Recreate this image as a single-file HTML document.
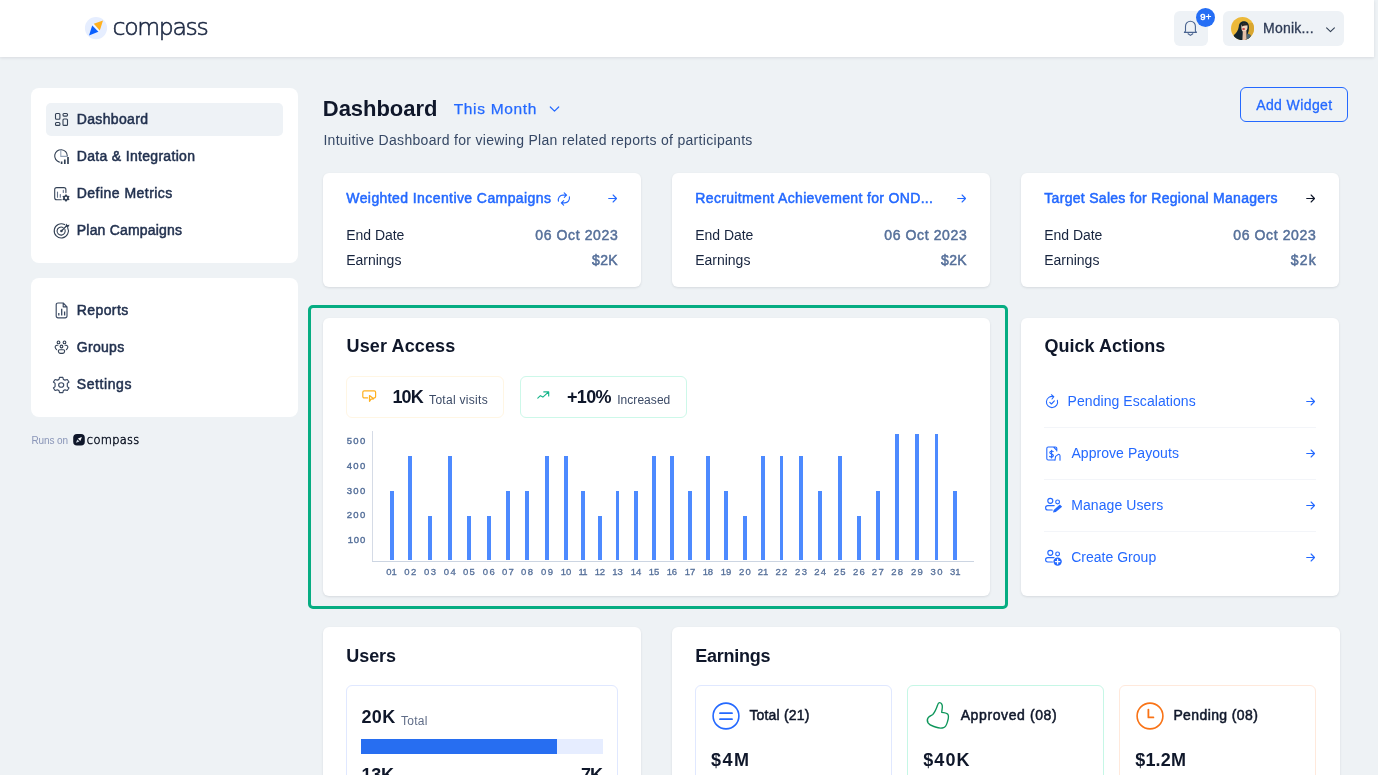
<!DOCTYPE html>
<html lang="en"><head><meta charset="utf-8"><title>Compass Dashboard</title>
<style>
*{box-sizing:border-box;margin:0;padding:0}
html,body{width:1378px;height:775px;overflow:hidden}
body{background:#eef2f5;font-family:"Liberation Sans",sans-serif;position:relative;color:#0f172a}
.a{position:absolute}
.t{position:absolute;white-space:nowrap;line-height:1}
.card{position:absolute;background:#fff;border-radius:6px;box-shadow:0 1px 3px rgba(16,24,40,.07),0 1px 2px rgba(16,24,40,.04)}
.box{position:absolute;background:#fff;border-radius:6px;border:1px solid #e0e8ff}
svg{position:absolute;overflow:visible}
.s{fill:none;stroke:#3b4a63;stroke-width:1.15;stroke-linecap:round;stroke-linejoin:round}
.sb{fill:none;stroke:#2469ff;stroke-width:1.1;stroke-linecap:round;stroke-linejoin:round}
.hr{position:absolute;height:1px;background:#f3f5f9;left:1044px;width:272px}
.bar{position:absolute;width:3.8px;background:#4d8aff}
</style></head>
<body>

<!-- header -->
<div class="a" style="left:0;top:0;width:1374px;height:57px;background:#fff;box-shadow:0 1px 3px rgba(16,24,40,.10)"></div>
<!-- logo -->
<svg style="left:85px;top:17.1px" width="22" height="22.4" viewBox="0 0 22 22.4">
 <circle cx="11" cy="11.1" r="11.1" fill="#e6eeff"/>
 <path d="M18 3.5 L8.8 6.7 L14.8 13.5 Z" fill="#ffb11f"/>
 <path d="M4 18.4 L7.2 8.5 L13.4 14.7 Z" fill="#0a60ff"/>
 <path d="M7.7 7.2 L14.4 14.4" stroke="#fff" stroke-width="1" fill="none"/>
</svg>
<!-- bell -->
<div class="a" style="left:1173.6px;top:11.1px;width:34.4px;height:34.7px;border-radius:6px;background:#eef2f6"></div>
<svg style="left:0;top:0" width="1378" height="57" viewBox="0 0 1378 57">
 <path d="M1185.5 31 V26.2 A4.95 4.95 0 0 1 1195.4 26.2 V31 L1196.5 32.4 H1184.4 Z M1188.1 33.7 L1190.45 35.4 L1192.8 33.7" fill="none" stroke="#4a6490" stroke-width="1.1" stroke-linejoin="round" stroke-linecap="round"/>
</svg>
<div class="a" style="left:1196.15px;top:7.7px;width:19.2px;height:19.2px;border-radius:50%;background:#256ef5"></div>
<!-- user -->
<div class="a" style="left:1223.1px;top:11.1px;width:120.5px;height:34.7px;border-radius:6px;background:#eef2f6"></div>
<svg style="left:1230.7px;top:16.9px" width="23" height="23" viewBox="0 0 23 23">
 <defs><clipPath id="av"><circle cx="11.5" cy="11.5" r="11.5"/></clipPath></defs>
 <g clip-path="url(#av)">
  <rect width="23" height="23" fill="#ecb93a"/>
  <rect x="17.2" y="6" width="6" height="14" fill="#d9a730"/>
  <path d="M7.8 9.5 C8 5.5 11 3.8 13.6 4.2 C16.8 4.6 18.2 7.4 18 10.5 C17.9 13 17.6 15 16.8 16.6 L19.6 18.4 L19 23 H4 L2.6 18.2 C5 16.6 7.4 13.6 7.8 9.5 Z" fill="#14252e"/>
  <path d="M16.2 16.4 L19.8 18 L18 22.4 L15.4 22.8 Z" fill="#4d6672"/>
  <path d="M10.6 8 C11.4 5.8 15.6 5.8 16.4 8.6 C16.9 10.6 16.4 13.4 14.6 14.6 C13.4 15.2 11.8 14.8 11 13.4 C10.2 12 10.2 9.6 10.6 8 Z" fill="#f0d3bd"/>
  <path d="M11.8 14 H15.4 L15.6 23 H11.4 Z" fill="#e2bfa6"/>
  <path d="M10.9 6.6 C12.6 5.6 14.8 5.8 16.2 7 L15.8 8.6 C14.4 8.2 12.6 8.4 11 9.4 Z" fill="#2a2622"/>
  <ellipse cx="12.6" cy="12" rx="1.5" ry="0.75" fill="#c3161f"/>
 </g>
</svg>
<svg style="left:1326px;top:26.5px" width="9" height="6" viewBox="0 0 9 6"><path class="s" style="stroke:#334155;stroke-width:1.1" d="M0.6 0.8 L4.5 4.7 L8.4 0.8"/></svg>

<!-- sidebar -->
<div class="a" style="left:31px;top:87.7px;width:267px;height:175.2px;background:#fff;border-radius:8px"></div>
<div class="a" style="left:46px;top:103px;width:237px;height:33px;background:#eef2f6;border-radius:5px"></div>
<div class="a" style="left:31px;top:278px;width:267px;height:138.5px;background:#fff;border-radius:8px"></div>

<!-- sidebar icons -->
<svg style="left:0;top:0" width="400" height="300" viewBox="0 0 400 300">
 <g class="s" style="stroke:#334155;stroke-width:1.1">
  <rect x="55.5" y="113.5" width="4.4" height="5.7" rx="1"/>
  <rect x="63" y="113.5" width="4.5" height="2.6" rx="1"/>
  <rect x="55.5" y="122.5" width="4.4" height="2.9" rx="1"/>
  <rect x="63" y="119" width="4.5" height="6.4" rx="1"/>
  <path d="M67.3 156 A6.3 6.3 0 1 0 59.4 162.1"/>
  <path style="stroke:#94a3b8" d="M60.8 150 V156.4 H67"/>
  <path d="M61.3 199.7 H56.7 A2 2 0 0 1 54.7 197.7 V189.6 A2 2 0 0 1 56.7 187.6 H63.9 A2 2 0 0 1 65.9 189.6 V192.6"/>
  <path style="stroke:#64748b" d="M57.5 192 V197.2 M60.3 194.6 V197.2 M63.3 190.4 V192.4"/>
  <path d="M67.6 227.6 A7.1 7.1 0 1 1 64.6 224.6"/>
  <path d="M64.9 229.4 A4.1 4.1 0 1 1 63 227.4"/>
  <path d="M61.4 231 L66.4 226"/>
 </g>
 <path d="M61.6 163.9 V161.5 M64.8 163.9 V159.5 M68 163.9 V157.1" stroke="#334155" stroke-width="1.7" fill="none"/>
 <path d="M66.00 193.90 L67.35 195.66 L69.55 195.95 L68.70 198.00 L69.55 200.05 L67.35 200.34 L66.00 202.10 L64.65 200.34 L62.45 200.05 L63.30 198.00 L62.45 195.95 L64.65 195.66 Z" fill="#334155"/>
 <circle cx="66" cy="198" r="1.15" fill="#fff"/>
 <circle cx="61.4" cy="231" r="1.3" fill="#334155"/>
 <path d="M65.6 226.8 L66 223.4 L67.4 225 L69.6 224.8 L68.2 227.2 Z" fill="#334155"/>
</svg>
<svg style="left:55px;top:302px" width="14" height="17" viewBox="0 0 14 17">
 <path class="s" d="M8.2 1 H3 A1.8 1.8 0 0 0 1.2 2.8 V14 A1.8 1.8 0 0 0 3 15.8 H10.2 A1.8 1.8 0 0 0 12 14 V4.8 Z M8.2 1 V4.8 H12"/>
 <path class="s" style="stroke-linecap:butt;stroke-width:1.3" d="M3.8 13.4 V11 M6.7 13.4 V6.8 M9.6 13.4 V9.4"/>
</svg>
<svg style="left:0;top:0" width="100" height="400" viewBox="0 0 100 400">
 <g class="s" style="stroke:#334155;stroke-width:1.1">
  <circle cx="58.5" cy="342.4" r="1.35"/><circle cx="64.5" cy="342.4" r="1.35"/><circle cx="61.5" cy="346.5" r="1.35"/>
  <path d="M57.9 345.3 H57 C55.6 345.3 55 346.4 55.2 347.4 C55.4 348.4 55.9 349 56.6 349.6 M65.1 345.3 H66 C67.4 345.3 68 346.4 67.8 347.4 C67.6 348.4 67.1 349 66.4 349.6"/>
  <path d="M59.7 349.7 H63.3 C64.2 349.7 64.8 350.3 64.7 351 C64.5 352.4 63.6 353.4 62.4 353.4 H60.6 C59.4 353.4 58.5 352.4 58.3 351 C58.2 350.3 58.8 349.7 59.7 349.7 Z"/>
 </g>
</svg>
<svg style="left:51.3px;top:375.7px" width="20.4" height="18" viewBox="0 0 16 16" preserveAspectRatio="none">
 <circle class="s" cx="8" cy="8" r="2" vector-effect="non-scaling-stroke"/>
 <path class="s" vector-effect="non-scaling-stroke" d="M6.7 1.2 H9.3 L9.7 3 L11 3.7 L12.8 3.1 L14.1 5.3 L12.8 6.6 V8 L12.8 9.4 L14.1 10.7 L12.8 12.9 L11 12.3 L9.7 13 L9.3 14.8 H6.7 L6.3 13 L5 12.3 L3.2 12.9 L1.9 10.7 L3.2 9.4 V6.6 L1.9 5.3 L3.2 3.1 L5 3.7 L6.3 3 Z"/>
</svg>
<!-- runs on logo -->
<svg style="left:72.7px;top:434.4px" width="12" height="12" viewBox="0 0 12 12">
 <rect x="0.2" y="0" width="11.6" height="11.6" rx="3.8" fill="#0f172a"/>
 <path d="M8.9 2.9 L4.9 4.5 L7.3 6.9 Z" fill="#fff"/><path d="M3 8.8 L4.3 5.4 L6.4 7.5 Z" fill="#cbd5e1"/>
</svg>

<!-- Add widget -->
<div class="a" style="left:1240px;top:87.3px;width:108px;height:34.6px;border:1px solid #2469ff;border-radius:6px"></div>
<svg style="left:549px;top:105.5px" width="11" height="7" viewBox="0 0 11 7"><path class="sb" style="stroke-width:1.2" d="M1.3 1 L5.5 5.2 L9.7 1"/></svg>

<!-- top cards -->
<div class="card" style="left:323px;top:173px;width:318px;height:113.5px"></div>
<div class="card" style="left:672px;top:173px;width:318px;height:113.5px"></div>
<div class="card" style="left:1021px;top:173px;width:318px;height:113.5px"></div>
<svg style="left:0;top:0" width="700" height="300" viewBox="0 0 700 300">
 <path class="sb" style="stroke-width:1.15" d="M558.4 201.2 C557.7 197.6 560 195.1 563 195.1 H566.4 M564.2 192.9 L566.6 195.1 L564.3 197.4 M569.4 196.8 C570 200.4 567.8 202.9 564.7 202.9 H561.4 M563.7 200.6 L561.3 202.9 L563.6 205.2"/>
</svg>
<svg style="left:608px;top:194.1px" width="10" height="9" viewBox="0 0 10 9"><path class="sb" d="M0.7 4.5 H8.4 M5.1 1 L8.5 4.5 L5.1 8"/></svg>
<svg style="left:957px;top:194.1px" width="10" height="9" viewBox="0 0 10 9"><path class="sb" d="M0.7 4.5 H8.4 M5.1 1 L8.5 4.5 L5.1 8"/></svg>
<svg style="left:1306px;top:194.1px" width="10" height="9" viewBox="0 0 10 9"><path class="sb" style="stroke:#0f172a" d="M0.7 4.5 H8.4 M5.1 1 L8.5 4.5 L5.1 8"/></svg>

<!-- highlight -->
<div class="a" style="left:308px;top:305px;width:700px;height:304px;border:3px solid #06ad82;border-radius:5px"></div>
<div class="card" style="left:323px;top:317.8px;width:667.2px;height:278px"></div>
<div class="box" style="left:346px;top:375.5px;width:158px;height:42px;border-color:#fff6e4"></div>
<div class="box" style="left:520px;top:375.5px;width:166.5px;height:42px;border-color:#cdf8e9"></div>
<svg style="left:362px;top:389.5px" width="15" height="12" viewBox="0 0 15 12">
 <path class="s" style="stroke:#ffb01f;stroke-width:1.2" d="M5.6 7.9 H2.2 A1.4 1.4 0 0 1 0.8 6.5 V2.2 A1.4 1.4 0 0 1 2.2 0.8 H12.2 A1.4 1.4 0 0 1 13.6 2.2 V6.5 A1.4 1.4 0 0 1 12.2 7.9 H12 M7.5 5.5 L11.6 8.8 L9 9.1 L7.5 11.3 Z"/>
</svg>
<svg style="left:536.5px;top:390.5px" width="13" height="9" viewBox="0 0 13 9">
 <path class="s" style="stroke:#16b58a" d="M0.8 7.1 L3.4 4.7 L5.9 6.1 L11.6 0.9 M6.8 0.9 H11.7 V5"/>
</svg>
<!-- chart axes -->
<div class="a" style="left:372px;top:431px;width:1px;height:130.5px;background:#d5dbe6"></div>
<div class="a" style="left:372px;top:560.8px;width:602px;height:1.2px;background:#ccd5e2"></div>
<div class="bar" style="left:389.9px;top:491px;height:69px"></div>
<div class="bar" style="left:408.4px;top:456px;height:104px"></div>
<div class="bar" style="left:428.1px;top:516px;height:44px"></div>
<div class="bar" style="left:447.9px;top:456px;height:104px"></div>
<div class="bar" style="left:467.0px;top:516px;height:44px"></div>
<div class="bar" style="left:486.9px;top:516px;height:44px"></div>
<div class="bar" style="left:506.0px;top:491px;height:69px"></div>
<div class="bar" style="left:525.1px;top:491px;height:69px"></div>
<div class="bar" style="left:545.1px;top:456px;height:104px"></div>
<div class="bar" style="left:564.1px;top:456px;height:104px"></div>
<div class="bar" style="left:581.1px;top:491px;height:69px"></div>
<div class="bar" style="left:598.0px;top:516px;height:44px"></div>
<div class="bar" style="left:615.7px;top:491px;height:69px"></div>
<div class="bar" style="left:634.2px;top:491px;height:69px"></div>
<div class="bar" style="left:652.1px;top:456px;height:104px"></div>
<div class="bar" style="left:670.0px;top:456px;height:104px"></div>
<div class="bar" style="left:688.1px;top:491px;height:69px"></div>
<div class="bar" style="left:706.0px;top:456px;height:104px"></div>
<div class="bar" style="left:724.1px;top:491px;height:69px"></div>
<div class="bar" style="left:743.0px;top:516px;height:44px"></div>
<div class="bar" style="left:761.1px;top:456px;height:104px"></div>
<div class="bar" style="left:779.5px;top:456px;height:104px"></div>
<div class="bar" style="left:799.1px;top:456px;height:104px"></div>
<div class="bar" style="left:818.2px;top:491px;height:69px"></div>
<div class="bar" style="left:837.8px;top:456px;height:104px"></div>
<div class="bar" style="left:857.0px;top:516px;height:44px"></div>
<div class="bar" style="left:875.9px;top:491px;height:69px"></div>
<div class="bar" style="left:895.2px;top:434px;height:126px"></div>
<div class="bar" style="left:915.0px;top:434px;height:126px"></div>
<div class="bar" style="left:934.6px;top:434px;height:126px"></div>
<div class="bar" style="left:953.4px;top:491px;height:69px"></div>


<!-- quick actions -->
<div class="card" style="left:1021px;top:317.8px;width:318px;height:278px"></div>
<div class="hr" style="top:427px"></div>
<div class="hr" style="top:479px"></div>
<div class="hr" style="top:531px"></div>
<svg style="left:1306px;top:396.8px" width="10" height="9" viewBox="0 0 10 9"><path class="sb" d="M0.7 4.5 H8.4 M5.1 1 L8.5 4.5 L5.1 8"/></svg>
<svg style="left:1306px;top:448.8px" width="10" height="9" viewBox="0 0 10 9"><path class="sb" d="M0.7 4.5 H8.4 M5.1 1 L8.5 4.5 L5.1 8"/></svg>
<svg style="left:1306px;top:500.8px" width="10" height="9" viewBox="0 0 10 9"><path class="sb" d="M0.7 4.5 H8.4 M5.1 1 L8.5 4.5 L5.1 8"/></svg>
<svg style="left:1306px;top:552.8px" width="10" height="9" viewBox="0 0 10 9"><path class="sb" d="M0.7 4.5 H8.4 M5.1 1 L8.5 4.5 L5.1 8"/></svg>

<svg style="left:1045.3px;top:393.8px" width="14" height="15" viewBox="0 0 14 15">
 <path class="sb" d="M8.6 2.6 A5.6 5.6 0 1 0 12.4 6.4 M6.4 0.8 L8.8 2.6 L7 5"/>
 <path class="sb" d="M4.8 8.4 L6.4 10 L9.4 6.8"/>
</svg>
<svg style="left:1046px;top:446px" width="15" height="15" viewBox="0 0 15 15">
 <path class="sb" d="M10.8 5 V2.4 A1.4 1.4 0 0 0 9.4 1 H2.2 A1.4 1.4 0 0 0 0.8 2.4 V12.6 A1.4 1.4 0 0 0 2.2 14 H9 M7.6 1 L10.8 4.4"/>
 <path class="sb" d="M7.2 5.4 C5.6 4.6 3.8 5.2 3.8 6.6 C3.8 8.6 7.4 7.6 7.4 9.6 C7.4 11 5.4 11.4 3.6 10.4 M5.6 4.2 V12"/>
 <path class="sb" d="M9 14 L9.6 10.4 L12 8.6 C13.2 8 14 8.8 14 10 V14.2"/>
</svg>
<svg style="left:0;top:0" width="1378" height="600" viewBox="0 0 1378 600">
 <g class="sb" style="stroke-width:1.15">
  <circle cx="1050.3" cy="500.8" r="2.5"/>
  <circle cx="1057.6" cy="501.9" r="1.9"/>
  <path d="M1054.2 505.6 H1047.8 A2.2 2.2 0 0 0 1047.8 510 H1052.2"/>
  <circle cx="1050.3" cy="552.8" r="2.5"/>
  <circle cx="1057.6" cy="553.9" r="1.9"/>
  <path d="M1054 557.6 H1047.8 A2.2 2.2 0 0 0 1047.8 562 H1052.4"/>
 </g>
 <path d="M1053 512.6 L1053.7 510 L1059.9 504.5 L1062.1 506.8 L1055.8 512.1 Z" fill="#2469ff"/>
 <circle cx="1057.6" cy="561.6" r="4.2" fill="#2469ff"/>
 <path d="M1057.6 559.4 V563.8 M1055.4 561.6 H1059.8" stroke="#fff" stroke-width="1.3" stroke-linecap="round"/>
</svg>

<!-- users -->
<div class="card" style="left:323px;top:626.8px;width:318px;height:200px"></div>
<div class="box" style="left:346px;top:685px;width:272px;height:140px"></div>
<div class="a" style="left:361px;top:739px;width:242px;height:15px;background:#e6edff"></div>
<div class="a" style="left:361px;top:739px;width:196px;height:15px;background:#276ef1"></div>

<!-- earnings -->
<div class="card" style="left:672px;top:626.8px;width:667.8px;height:200px"></div>
<div class="box" style="left:695px;top:685px;width:196.5px;height:140px"></div>
<div class="box" style="left:907px;top:685px;width:196.5px;height:140px;border-color:#c6f7e6"></div>
<div class="box" style="left:1119px;top:685px;width:197px;height:140px;border-color:#ffe9dc"></div>
<svg style="left:711.5px;top:701.5px" width="28" height="28" viewBox="0 0 28 28">
 <circle cx="14" cy="14" r="12.9" fill="none" stroke="#2469ff" stroke-width="1.6"/>
 <path d="M8 11.2 H20 M8 17.2 H20" stroke="#2469ff" stroke-width="1.8" stroke-linecap="round"/>
</svg>
<svg style="left:0;top:0" width="1378" height="775" viewBox="0 0 1378 775">
 <path d="M939.5 702.6 C941.5 702.6 942.6 705 942.3 707.5 L941.7 712.4 C944 712.6 946.5 713 947.6 714 C949 715.4 948.6 718 947.6 721.2 C946.8 724 946.4 726.6 943.6 727.6 C941 728.6 938 728 935.4 727 C932.6 726 929.6 725.4 928.2 723.2 C927 721.2 927.2 719 928.2 717.6 C929.6 716 931.4 715.6 932.8 714.4 C935 712.2 936.4 708.6 937.6 705 C938 703.6 938.6 702.6 939.5 702.6 Z" fill="none" stroke="#0d965a" stroke-width="1.35" stroke-linejoin="round"/>
</svg>
<svg style="left:1136px;top:701.5px" width="28" height="28" viewBox="0 0 28 28">
 <circle cx="14" cy="14" r="12.9" fill="none" stroke="#f97316" stroke-width="1.6"/>
 <path d="M12.4 7.6 V15.4 H17.4" fill="none" stroke="#f97316" stroke-width="1.8" stroke-linecap="round" stroke-linejoin="round"/>
</svg>

<!-- text -->
<div class="a" style="left:0;top:0;width:1378px;height:775px;will-change:transform">
<div class="t" style="left:112.60px;top:16.00px;font-size:23.6px;font-weight:200;letter-spacing:-1.370px;color:#1e2a44;font-family:'DejaVu Sans',sans-serif;-webkit-text-stroke:0.6px #1e2a44;">compass</div>
<div class="t" style="left:1200.20px;top:12.00px;font-size:9.5px;letter-spacing:0.156px;color:#fff;-webkit-text-stroke:0.45px #fff;">9+</div>
<div class="t" style="left:1263.00px;top:21.00px;font-size:14px;letter-spacing:0.226px;color:#2d3a55;-webkit-text-stroke:0.3px #2d3a55;">Monik...</div>
<div class="t" style="left:76.80px;top:112.00px;font-size:14px;letter-spacing:0.338px;color:#22314f;-webkit-text-stroke:0.5px #22314f;">Dashboard</div>
<div class="t" style="left:76.80px;top:149.00px;font-size:14px;letter-spacing:0.314px;color:#22314f;-webkit-text-stroke:0.5px #22314f;">Data &amp; Integration</div>
<div class="t" style="left:76.80px;top:186.00px;font-size:14px;letter-spacing:0.464px;color:#22314f;-webkit-text-stroke:0.5px #22314f;">Define Metrics</div>
<div class="t" style="left:76.80px;top:223.00px;font-size:14px;letter-spacing:0.197px;color:#22314f;-webkit-text-stroke:0.5px #22314f;">Plan Campaigns</div>
<div class="t" style="left:76.80px;top:303.00px;font-size:14px;letter-spacing:0.395px;color:#22314f;-webkit-text-stroke:0.5px #22314f;">Reports</div>
<div class="t" style="left:76.80px;top:340.00px;font-size:14px;letter-spacing:0.296px;color:#22314f;-webkit-text-stroke:0.5px #22314f;">Groups</div>
<div class="t" style="left:76.80px;top:377.00px;font-size:14px;letter-spacing:0.587px;color:#22314f;-webkit-text-stroke:0.5px #22314f;">Settings</div>
<div class="t" style="left:31.40px;top:436.00px;font-size:10px;letter-spacing:-0.092px;color:#8a96b8;">Runs on</div>
<div class="t" style="left:86.80px;top:435.00px;font-size:11.4px;font-weight:200;letter-spacing:0.346px;color:#111827;font-family:'DejaVu Sans',sans-serif;-webkit-text-stroke:0.5px #111827;">compass</div>
<div class="t" style="left:322.80px;top:98.00px;font-size:22px;font-weight:700;letter-spacing:-0.040px;color:#0f172a;">Dashboard</div>
<div class="t" style="left:453.70px;top:101.00px;font-size:15.5px;letter-spacing:0.670px;color:#2469ff;-webkit-text-stroke:0.25px #2469ff;">This Month</div>
<div class="t" style="left:323.40px;top:133.00px;font-size:14px;letter-spacing:0.305px;color:#364865;">Intuitive Dashboard for viewing Plan related reports of participants</div>
<div class="t" style="left:1256.20px;top:98.00px;font-size:14px;letter-spacing:0.403px;color:#2469ff;-webkit-text-stroke:0.3px #2469ff;">Add Widget</div>
<div class="t" style="left:346.30px;top:191.00px;font-size:14px;letter-spacing:0.414px;color:#2469ff;-webkit-text-stroke:0.5px #2469ff;">Weighted Incentive Campaigns</div>
<div class="t" style="left:346.30px;top:228.00px;font-size:14px;letter-spacing:-0.054px;color:#17243e;">End Date</div>
<div class="t" style="left:535.30px;top:228.00px;font-size:14px;letter-spacing:0.612px;color:#56709a;-webkit-text-stroke:0.5px #56709a;">06 Oct 2023</div>
<div class="t" style="left:346.30px;top:253.00px;font-size:14px;letter-spacing:-0.024px;color:#17243e;">Earnings</div>
<div class="t" style="left:592.00px;top:253.00px;font-size:14px;letter-spacing:0.389px;color:#56709a;-webkit-text-stroke:0.5px #56709a;">$2K</div>
<div class="t" style="left:695.30px;top:191.00px;font-size:14px;letter-spacing:0.342px;color:#2469ff;-webkit-text-stroke:0.5px #2469ff;">Recruitment Achievement for OND...</div>
<div class="t" style="left:695.30px;top:228.00px;font-size:14px;letter-spacing:-0.054px;color:#17243e;">End Date</div>
<div class="t" style="left:884.30px;top:228.00px;font-size:14px;letter-spacing:0.612px;color:#56709a;-webkit-text-stroke:0.5px #56709a;">06 Oct 2023</div>
<div class="t" style="left:695.30px;top:253.00px;font-size:14px;letter-spacing:-0.024px;color:#17243e;">Earnings</div>
<div class="t" style="left:941.00px;top:253.00px;font-size:14px;letter-spacing:0.389px;color:#56709a;-webkit-text-stroke:0.5px #56709a;">$2K</div>
<div class="t" style="left:1044.30px;top:191.00px;font-size:14px;letter-spacing:0.296px;color:#2469ff;-webkit-text-stroke:0.5px #2469ff;">Target Sales for Regional Managers</div>
<div class="t" style="left:1044.30px;top:228.00px;font-size:14px;letter-spacing:-0.054px;color:#17243e;">End Date</div>
<div class="t" style="left:1233.30px;top:228.00px;font-size:14px;letter-spacing:0.612px;color:#56709a;-webkit-text-stroke:0.5px #56709a;">06 Oct 2023</div>
<div class="t" style="left:1044.30px;top:253.00px;font-size:14px;letter-spacing:-0.024px;color:#17243e;">Earnings</div>
<div class="t" style="left:1290.70px;top:253.00px;font-size:14px;letter-spacing:1.211px;color:#56709a;-webkit-text-stroke:0.5px #56709a;">$2k</div>
<div class="t" style="left:346.50px;top:337.00px;font-size:18px;font-weight:700;letter-spacing:0.128px;color:#0f172a;">User Access</div>
<div class="t" style="left:392.50px;top:388.00px;font-size:18px;font-weight:700;letter-spacing:-0.916px;color:#0f172a;">10K</div>
<div class="t" style="left:429.10px;top:394.00px;font-size:12px;letter-spacing:0.295px;color:#3b4a66;">Total visits</div>
<div class="t" style="left:567.00px;top:388.00px;font-size:18px;font-weight:700;letter-spacing:-0.649px;color:#0f172a;">+10%</div>
<div class="t" style="left:617.20px;top:394.00px;font-size:12px;letter-spacing:0.050px;color:#3b4a66;">Increased</div>
<div class="t" style="left:346.70px;top:436.00px;font-size:9.5px;letter-spacing:1.320px;color:#56709a;-webkit-text-stroke:0.4px #56709a;">500</div>
<div class="t" style="left:346.70px;top:461.00px;font-size:9.5px;letter-spacing:1.320px;color:#56709a;-webkit-text-stroke:0.4px #56709a;">400</div>
<div class="t" style="left:346.70px;top:486.00px;font-size:9.5px;letter-spacing:1.320px;color:#56709a;-webkit-text-stroke:0.4px #56709a;">300</div>
<div class="t" style="left:346.70px;top:510.00px;font-size:9.5px;letter-spacing:1.320px;color:#56709a;-webkit-text-stroke:0.4px #56709a;">200</div>
<div class="t" style="left:347.70px;top:535.00px;font-size:9.5px;letter-spacing:0.820px;color:#56709a;-webkit-text-stroke:0.4px #56709a;">100</div>
<div class="t" style="left:386.25px;top:567.00px;font-size:9.5px;letter-spacing:-0.078px;color:#56709a;-webkit-text-stroke:0.3px #56709a;">01</div>
<div class="t" style="left:404.35px;top:567.00px;font-size:9.5px;letter-spacing:1.322px;color:#56709a;-webkit-text-stroke:0.3px #56709a;">02</div>
<div class="t" style="left:424.05px;top:567.00px;font-size:9.5px;letter-spacing:1.322px;color:#56709a;-webkit-text-stroke:0.3px #56709a;">03</div>
<div class="t" style="left:443.85px;top:567.00px;font-size:9.5px;letter-spacing:1.322px;color:#56709a;-webkit-text-stroke:0.3px #56709a;">04</div>
<div class="t" style="left:462.95px;top:567.00px;font-size:9.5px;letter-spacing:1.322px;color:#56709a;-webkit-text-stroke:0.3px #56709a;">05</div>
<div class="t" style="left:482.85px;top:567.00px;font-size:9.5px;letter-spacing:1.322px;color:#56709a;-webkit-text-stroke:0.3px #56709a;">06</div>
<div class="t" style="left:501.95px;top:567.00px;font-size:9.5px;letter-spacing:1.322px;color:#56709a;-webkit-text-stroke:0.3px #56709a;">07</div>
<div class="t" style="left:521.05px;top:567.00px;font-size:9.5px;letter-spacing:1.322px;color:#56709a;-webkit-text-stroke:0.3px #56709a;">08</div>
<div class="t" style="left:541.05px;top:567.00px;font-size:9.5px;letter-spacing:1.322px;color:#56709a;-webkit-text-stroke:0.3px #56709a;">09</div>
<div class="t" style="left:560.75px;top:567.00px;font-size:9.5px;letter-spacing:-0.078px;color:#56709a;-webkit-text-stroke:0.3px #56709a;">10</div>
<div class="t" style="left:578.45px;top:567.00px;font-size:9.5px;letter-spacing:-0.775px;color:#56709a;-webkit-text-stroke:0.3px #56709a;">11</div>
<div class="t" style="left:594.65px;top:567.00px;font-size:9.5px;letter-spacing:-0.078px;color:#56709a;-webkit-text-stroke:0.3px #56709a;">12</div>
<div class="t" style="left:612.35px;top:567.00px;font-size:9.5px;letter-spacing:-0.078px;color:#56709a;-webkit-text-stroke:0.3px #56709a;">13</div>
<div class="t" style="left:630.85px;top:567.00px;font-size:9.5px;letter-spacing:-0.078px;color:#56709a;-webkit-text-stroke:0.3px #56709a;">14</div>
<div class="t" style="left:648.75px;top:567.00px;font-size:9.5px;letter-spacing:-0.078px;color:#56709a;-webkit-text-stroke:0.3px #56709a;">15</div>
<div class="t" style="left:666.65px;top:567.00px;font-size:9.5px;letter-spacing:-0.078px;color:#56709a;-webkit-text-stroke:0.3px #56709a;">16</div>
<div class="t" style="left:684.75px;top:567.00px;font-size:9.5px;letter-spacing:-0.078px;color:#56709a;-webkit-text-stroke:0.3px #56709a;">17</div>
<div class="t" style="left:702.65px;top:567.00px;font-size:9.5px;letter-spacing:-0.078px;color:#56709a;-webkit-text-stroke:0.3px #56709a;">18</div>
<div class="t" style="left:720.75px;top:567.00px;font-size:9.5px;letter-spacing:-0.078px;color:#56709a;-webkit-text-stroke:0.3px #56709a;">19</div>
<div class="t" style="left:738.95px;top:567.00px;font-size:9.5px;letter-spacing:1.322px;color:#56709a;-webkit-text-stroke:0.3px #56709a;">20</div>
<div class="t" style="left:757.75px;top:567.00px;font-size:9.5px;letter-spacing:-0.078px;color:#56709a;-webkit-text-stroke:0.3px #56709a;">21</div>
<div class="t" style="left:775.45px;top:567.00px;font-size:9.5px;letter-spacing:1.322px;color:#56709a;-webkit-text-stroke:0.3px #56709a;">22</div>
<div class="t" style="left:795.05px;top:567.00px;font-size:9.5px;letter-spacing:1.322px;color:#56709a;-webkit-text-stroke:0.3px #56709a;">23</div>
<div class="t" style="left:814.15px;top:567.00px;font-size:9.5px;letter-spacing:1.322px;color:#56709a;-webkit-text-stroke:0.3px #56709a;">24</div>
<div class="t" style="left:833.75px;top:567.00px;font-size:9.5px;letter-spacing:1.322px;color:#56709a;-webkit-text-stroke:0.3px #56709a;">25</div>
<div class="t" style="left:852.95px;top:567.00px;font-size:9.5px;letter-spacing:1.322px;color:#56709a;-webkit-text-stroke:0.3px #56709a;">26</div>
<div class="t" style="left:871.85px;top:567.00px;font-size:9.5px;letter-spacing:1.322px;color:#56709a;-webkit-text-stroke:0.3px #56709a;">27</div>
<div class="t" style="left:891.15px;top:567.00px;font-size:9.5px;letter-spacing:1.322px;color:#56709a;-webkit-text-stroke:0.3px #56709a;">28</div>
<div class="t" style="left:910.95px;top:567.00px;font-size:9.5px;letter-spacing:1.322px;color:#56709a;-webkit-text-stroke:0.3px #56709a;">29</div>
<div class="t" style="left:930.55px;top:567.00px;font-size:9.5px;letter-spacing:1.322px;color:#56709a;-webkit-text-stroke:0.3px #56709a;">30</div>
<div class="t" style="left:950.05px;top:567.00px;font-size:9.5px;letter-spacing:-0.078px;color:#56709a;-webkit-text-stroke:0.3px #56709a;">31</div>
<div class="t" style="left:1044.40px;top:337.00px;font-size:18px;font-weight:700;letter-spacing:0.045px;color:#0f172a;">Quick Actions</div>
<div class="t" style="left:1067.50px;top:394.00px;font-size:14px;letter-spacing:0.074px;color:#2469ff;">Pending Escalations</div>
<div class="t" style="left:1071.40px;top:446.00px;font-size:14px;letter-spacing:0.062px;color:#2469ff;">Approve Payouts</div>
<div class="t" style="left:1071.20px;top:498.00px;font-size:14px;letter-spacing:0.087px;color:#2469ff;">Manage Users</div>
<div class="t" style="left:1071.20px;top:550.00px;font-size:14px;letter-spacing:0.016px;color:#2469ff;">Create Group</div>
<div class="t" style="left:346.30px;top:647.00px;font-size:18px;font-weight:700;letter-spacing:-0.087px;color:#0f172a;">Users</div>
<div class="t" style="left:361.40px;top:708.00px;font-size:18px;font-weight:700;letter-spacing:0.384px;color:#0f172a;">20K</div>
<div class="t" style="left:400.90px;top:715.00px;font-size:12px;letter-spacing:0.310px;color:#606d88;">Total</div>
<div class="t" style="left:361.40px;top:766.00px;font-size:18px;font-weight:700;letter-spacing:-0.266px;color:#0f172a;">13K</div>
<div class="t" style="left:581.00px;top:766.00px;font-size:18px;font-weight:700;letter-spacing:-1.016px;color:#0f172a;">7K</div>
<div class="t" style="left:695.30px;top:647.00px;font-size:18px;font-weight:700;letter-spacing:-0.247px;color:#0f172a;">Earnings</div>
<div class="t" style="left:749.40px;top:708.00px;font-size:14px;letter-spacing:0.171px;color:#0f172a;-webkit-text-stroke:0.5px #0f172a;">Total (21)</div>
<div class="t" style="left:711.10px;top:751.00px;font-size:18px;font-weight:700;letter-spacing:1.392px;color:#0f172a;">$4M</div>
<div class="t" style="left:960.70px;top:708.00px;font-size:14px;letter-spacing:0.598px;color:#0f172a;-webkit-text-stroke:0.5px #0f172a;">Approved (08)</div>
<div class="t" style="left:923.30px;top:751.00px;font-size:18px;font-weight:700;letter-spacing:1.056px;color:#0f172a;">$40K</div>
<div class="t" style="left:1173.40px;top:708.00px;font-size:14px;letter-spacing:0.393px;color:#0f172a;-webkit-text-stroke:0.5px #0f172a;">Pending (08)</div>
<div class="t" style="left:1135.20px;top:751.00px;font-size:18px;font-weight:700;letter-spacing:0.192px;color:#0f172a;">$1.2M</div>
</div>
</body></html>
